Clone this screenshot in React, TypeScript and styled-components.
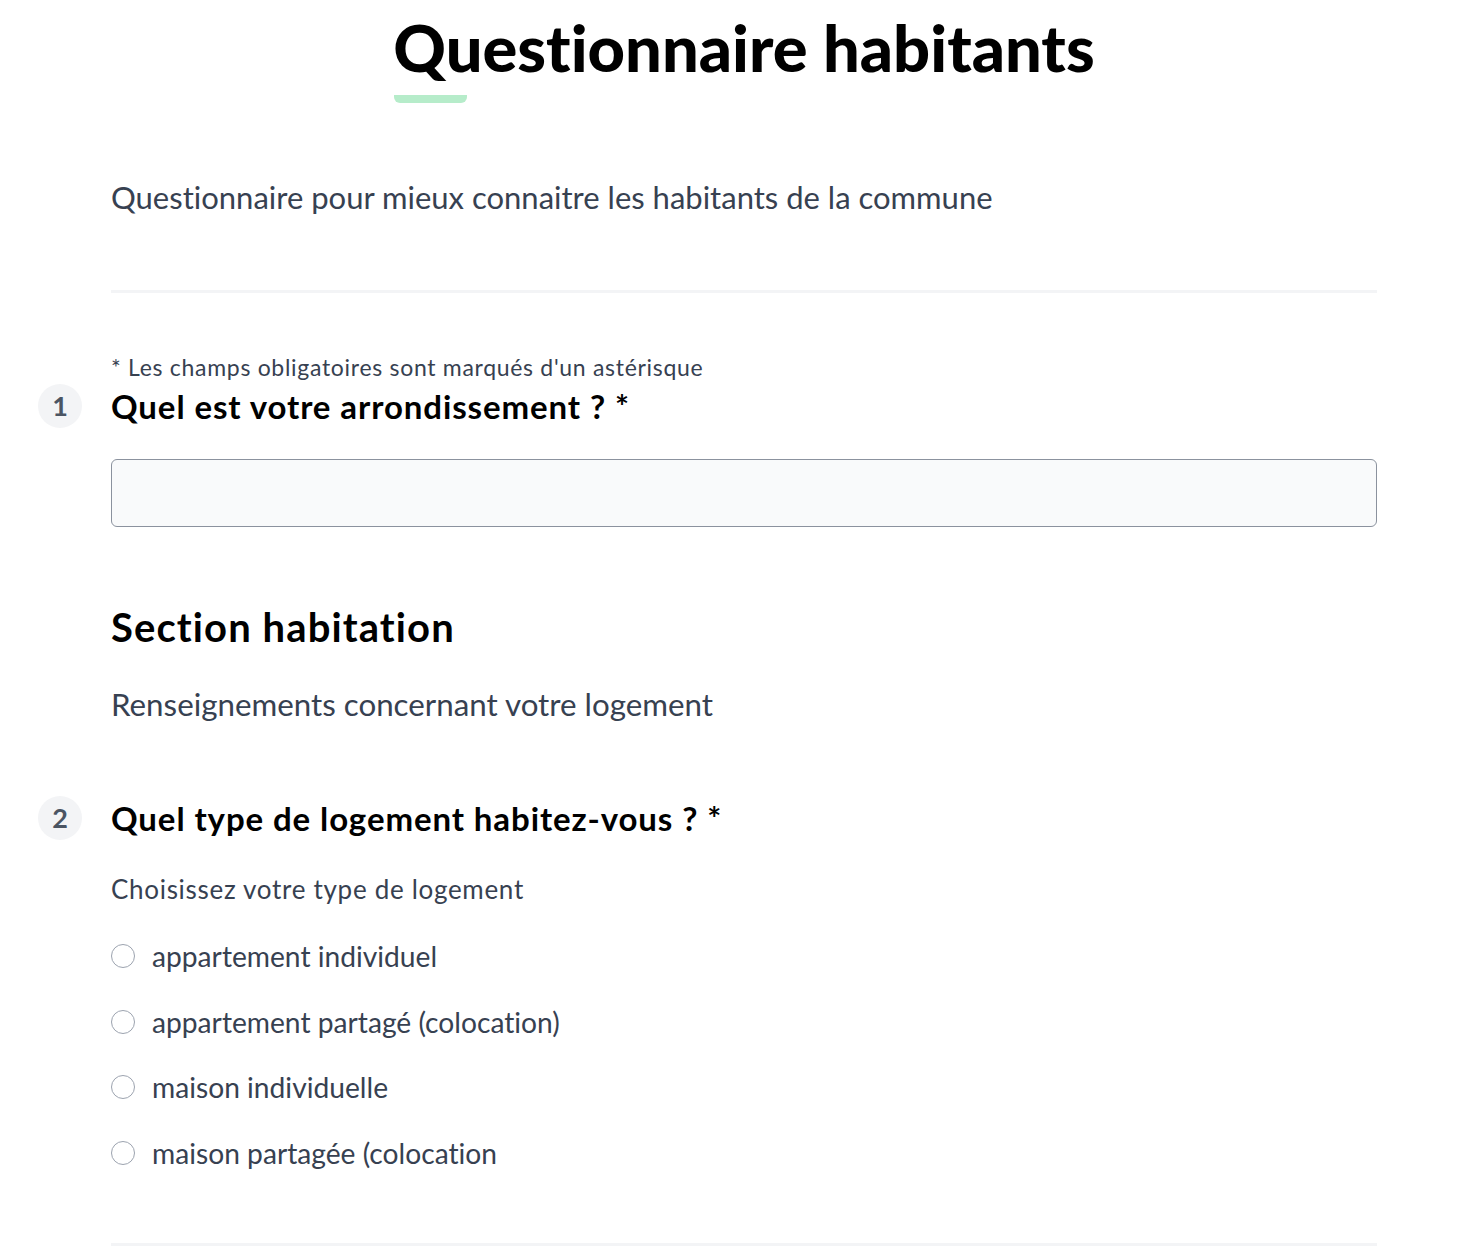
import React from "react";
import styled, { createGlobalStyle } from "styled-components";

const GlobalStyle = createGlobalStyle`
  html, body {
    margin: 0;
    padding: 0;
    background: #ffffff;
  }
  body {
    font-family: Lato, "Noto Sans", "Liberation Sans", sans-serif;
    font-variant-ligatures: none;
    color: #000000;
  }
  * { box-sizing: border-box; }
`;

const Page = styled.main`
  width: 1266px;
  margin-left: 111px;
  padding-bottom: 7px;
`;

const Header = styled.header`
  text-align: center;
`;

const Title = styled.h1`
  display: inline-block;
  margin: 0;
  font-size: 65px;
  line-height: 94px;
  font-weight: 900;
  letter-spacing: 0;
  text-align: left;
  &::after {
    content: "";
    display: block;
    width: 73px;
    height: 8px;
    margin-top: 1px;
    margin-left: 1px;
    background: #b6ecca;
    border-radius: 0 0 6px 6px;
  }
`;

const Lead = styled.p<{ $top: number; $size: number; $lh: number; $ls?: number }>`
  margin: ${(p) => p.$top}px 0 0;
  font-size: ${(p) => p.$size}px;
  line-height: ${(p) => p.$lh}px;
  letter-spacing: ${(p) => p.$ls ?? 0}px;
  color: #374151;
  font-weight: 400;
`;

const Rule = styled.hr<{ $top: number }>`
  margin: ${(p) => p.$top}px 0 0;
  border: 0;
  height: 3px;
  background: #f3f4f6;
`;

const Note = styled.p`
  margin: 60.4px 0 0;
  font-size: 23px;
  line-height: 28px;
  letter-spacing: 0.7px;
  color: #374151;
`;

const QuestionRow = styled.div<{ $top: number }>`
  display: flex;
  align-items: center;
  height: 40px;
  margin-top: ${(p) => p.$top}px;
`;

const Badge = styled.span`
  flex: none;
  width: 44px;
  height: 44px;
  margin-left: -73px;
  margin-right: 29px;
  border-radius: 50%;
  background: #f3f4f6;
  color: #4b5563;
  font-size: 27px;
  font-weight: 700;
  display: flex;
  align-items: center;
  justify-content: center;
`;

const Question = styled.h2`
  margin: 0;
  font-size: 33px;
  line-height: 40px;
  letter-spacing: 0.9px;
  font-weight: 700;
  color: #000000;
`;

const TextInput = styled.input`
  display: block;
  width: 100%;
  height: 68px;
  margin-top: 33px;
  border: 1px solid #8b929e;
  border-radius: 6px;
  background: #f9fafb;
  padding: 0 16px;
  font: inherit;
  font-size: 28px;
`;

const SectionTitle = styled.h2`
  margin: 76px 0 0;
  font-size: 40px;
  line-height: 48px;
  letter-spacing: 1.1px;
  font-weight: 700;
`;

const RadioGroup = styled.div`
  display: flex;
  flex-direction: column;
  gap: 29.7px;
  margin-top: 31.7px;
`;

const RadioRow = styled.label`
  display: flex;
  align-items: center;
  height: 36px;
  font-size: 28.2px;
  color: #374151;
  cursor: pointer;
`;

const RadioInput = styled.input`
  appearance: none;
  flex: none;
  width: 24px;
  height: 24px;
  margin: 0 17px 0 0;
  border: 1px solid #9ca3af;
  border-radius: 50%;
  background: #ffffff;
`;

const options = [
  "appartement individuel",
  "appartement partagé (colocation)",
  "maison individuelle",
  "maison partagée (colocation",
];

export default function App() {
  return (
    <>
      <GlobalStyle />
      <Page>
        <Header>
          <Title>Questionnaire habitants</Title>
        </Header>
        <Lead $top={72.7} $size={31} $lh={42}>
          Questionnaire pour mieux connaitre les habitants de la commune
        </Lead>
        <Rule $top={72.3} />
        <Note>* Les champs obligatoires sont marqués d'un astérisque</Note>
        <QuestionRow $top={4.6}>
          <Badge>1</Badge>
          <Question>Quel est votre arrondissement ? *</Question>
        </QuestionRow>
        <TextInput type="text" aria-label="Quel est votre arrondissement ?" />
        <SectionTitle>Section habitation</SectionTitle>
        <Lead $top={32} $size={31.3} $lh={42}>
          Renseignements concernant votre logement
        </Lead>
        <QuestionRow $top={73}>
          <Badge>2</Badge>
          <Question>Quel type de logement habitez-vous ? *</Question>
        </QuestionRow>
        <Lead $top={34.3} $size={26} $lh={34} $ls={0.7}>
          Choisissez votre type de logement
        </Lead>
        <RadioGroup>
          {options.map((o) => (
            <RadioRow key={o}>
              <RadioInput type="radio" name="logement" />
              {o}
            </RadioRow>
          ))}
        </RadioGroup>
        <Rule $top={72} />
      </Page>
    </>
  );
}
